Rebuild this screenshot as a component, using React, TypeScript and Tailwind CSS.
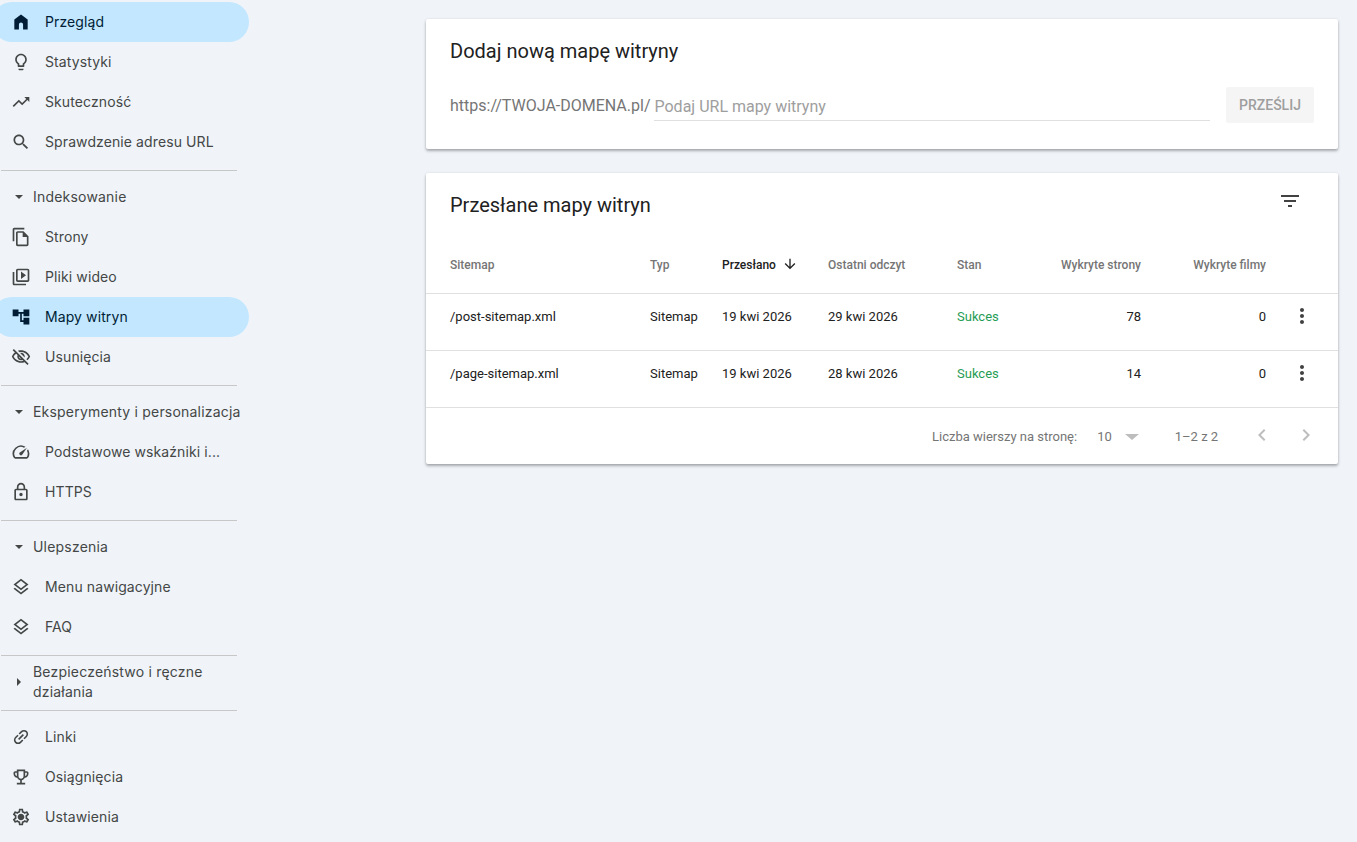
import React from "react";

const P: Record<string, string> = {
  home: "M4 21V9l8-6 8 6v12h-5.5v-6a2.5 2.5 0 0 0-5 0v6z",
  bulb: "M9 21c0 .55.45 1 1 1h4c.55 0 1-.45 1-1v-1H9v1zm3-19C8.14 2 5 5.14 5 9c0 2.38 1.19 4.47 3 5.74V17c0 .55.45 1 1 1h6c.55 0 1-.45 1-1v-2.26c1.81-1.27 3-3.36 3-5.74 0-3.86-3.14-7-7-7zm2.85 11.1l-.85.6V16h-4v-2.3l-.85-.6C7.8 12.16 7 10.63 7 9c0-2.76 2.24-5 5-5s5 2.24 5 5c0 1.63-.8 3.16-2.15 4.1z",
  trend: "M16 6l2.29 2.29-4.88 4.88-4-4L2 16.59 3.41 18l6-6 4 4 6.3-6.29L22 12V6z",
  search: "M15.5 14h-.79l-.28-.27C15.41 12.59 16 11.11 16 9.5 16 5.91 13.09 3 9.5 3S3 5.91 3 9.5 5.91 16 9.5 16c1.61 0 3.09-.59 4.23-1.57l.27.28v.79l5 4.99L20.49 19l-4.99-5zm-6 0C7.01 14 5 11.99 5 9.5S7.01 5 9.5 5 14 7.01 14 9.5 11.99 14 9.5 14z",
  copy: "M16 1H4c-1.1 0-2 .9-2 2v14h2V3h12V1zm-1 4H8c-1.1 0-1.99.9-1.99 2L6 21c0 1.1.89 2 1.99 2H19c1.1 0 2-.9 2-2V11l-6-6zM8 21V7h6v5h5v9H8z",
  video: "M4 6H2v14c0 1.1.9 2 2 2h14v-2H4V6zm16-4H8c-1.1 0-2 .9-2 2v12c0 1.1.9 2 2 2h12c1.1 0 2-.9 2-2V4c0-1.1-.9-2-2-2zm0 14H8V4h12v12zM12 5.5v9l6-4.5z",
  tree: "M22 11V3h-7v3H9V3H2v8h7V8h2v10h4v3h7v-8h-7v3h-2V8h2v3z",
  eyeoff: "M12 6c3.79 0 7.17 2.13 8.82 5.5-.59 1.22-1.42 2.27-2.41 3.12l1.41 1.41c1.39-1.23 2.49-2.77 3.18-4.53C21.27 7.11 17 4 12 4c-1.27 0-2.49.2-3.64.57l1.65 1.65C10.66 6.09 11.32 6 12 6zm-1.07 1.14L13 9.21c.57.25 1.03.71 1.28 1.28l2.07 2.07c.08-.34.14-.7.14-1.07C16.5 9.01 14.48 7 12 7c-.37 0-.72.05-1.07.14zM2.01 3.87l2.68 2.68C3.06 7.83 1.77 9.53 1 11.5 2.73 15.89 7 19 12 19c1.52 0 2.98-.29 4.32-.82l3.42 3.42 1.41-1.41L3.42 2.45 2.01 3.87zm7.5 7.5l2.61 2.61c-.04.01-.08.02-.12.02-1.38 0-2.5-1.12-2.5-2.5 0-.05.01-.08.01-.13zm-3.4-3.4l1.75 1.75c-.23.55-.36 1.15-.36 1.78 0 2.48 2.02 4.5 4.5 4.5.63 0 1.23-.13 1.77-.36l.98.98c-.88.24-1.8.38-2.75.38-3.79 0-7.17-2.13-8.82-5.5.7-1.43 1.72-2.61 2.93-3.53z",
  speed: "M20.38 8.57l-1.23 1.85a8 8 0 0 1-.22 7.58H5.07A8 8 0 0 1 15.58 6.85l1.85-1.23A10 10 0 0 0 3.35 19a2 2 0 0 0 1.72 1h13.85a2 2 0 0 0 1.74-1 10 10 0 0 0-.27-10.44zm-9.79 6.84a2 2 0 0 0 2.83 0l5.66-8.49-8.49 5.66a2 2 0 0 0 0 2.83z",
  lock: "M18 8h-1V6c0-2.76-2.24-5-5-5S7 3.24 7 6v2H6c-1.1 0-2 .9-2 2v10c0 1.1.9 2 2 2h12c1.1 0 2-.9 2-2V10c0-1.1-.9-2-2-2zM9 6c0-1.66 1.34-3 3-3s3 1.34 3 3v2H9V6zm9 14H6V10h12v10zm-6-3c1.1 0 2-.9 2-2s-.9-2-2-2-2 .9-2 2 .9 2 2 2z",
  layers: "M11.99 18.54l-7.37-5.73L3 14.07l9 7 9-7-1.63-1.27zM12 16l7.36-5.73L21 9l-9-7-9 7 1.63 1.27L12 16zm0-11.47L17.74 9 12 13.47 6.26 9 12 4.53z",
  link: "M3.9 12c0-1.71 1.39-3.1 3.1-3.1h4V7H7c-2.76 0-5 2.24-5 5s2.24 5 5 5h4v-1.9H7c-1.71 0-3.1-1.39-3.1-3.1zM8 13h8v-2H8v2zm9-6h-4v1.9h4c1.71 0 3.1 1.39 3.1 3.1s-1.39 3.1-3.1 3.1h-4V17h4c2.76 0 5-2.24 5-5s-2.24-5-5-5z",
  trophy: "M19 5h-2V3H7v2H5c-1.1 0-2 .9-2 2v1c0 2.55 1.92 4.63 4.39 4.94.63 1.5 1.98 2.63 3.61 2.96V19H7v2h10v-2h-4v-3.1c1.63-.33 2.98-1.46 3.61-2.96C19.08 12.63 21 10.55 21 8V7c0-1.1-.9-2-2-2zM5 8V7h2v3.82C5.84 10.4 5 9.3 5 8zm7 6c-1.65 0-3-1.35-3-3V5h6v6c0 1.65-1.35 3-3 3zm7-6c0 1.3-.84 2.4-2 2.82V7h2v1z",
  gear: "M19.43 12.98c.04-.32.07-.64.07-.98 0-.34-.03-.66-.07-.98l2.11-1.65c.19-.15.24-.42.12-.64l-2-3.46c-.09-.16-.26-.25-.44-.25-.06 0-.12.01-.17.03l-2.49 1c-.52-.4-1.08-.73-1.69-.98l-.38-2.65C14.46 2.18 14.25 2 14 2h-4c-.25 0-.46.18-.49.42l-.38 2.65c-.61.25-1.17.59-1.69.98l-2.49-1c-.06-.02-.12-.03-.18-.03-.17 0-.34.09-.43.25l-2 3.46c-.13.22-.07.49.12.64l2.11 1.65c-.04.32-.07.65-.07.98 0 .33.03.66.07.98l-2.11 1.65c-.19.15-.24.42-.12.64l2 3.46c.09.16.26.25.44.25.06 0 .12-.01.17-.03l2.49-1c.52.4 1.08.73 1.69.98l.38 2.65c.03.24.24.42.49.42h4c.25 0 .46-.18.49-.42l.38-2.65c.61-.25 1.17-.59 1.69-.98l2.49 1c.06.02.12.03.18.03.17 0 .34-.09.43-.25l2-3.46c.12-.22.07-.49-.12-.64l-2.11-1.65zm-1.98-1.71c.04.31.05.52.05.73 0 .21-.02.43-.05.73l-.14 1.13.89.7 1.08.84-.7 1.21-1.27-.51-1.04-.42-.9.68c-.43.32-.84.56-1.25.73l-1.06.43-.16 1.13-.2 1.35h-1.4l-.19-1.35-.16-1.13-1.06-.43c-.43-.18-.83-.41-1.23-.71l-.91-.7-1.06.43-1.27.51-.7-1.21 1.08-.84.89-.7-.14-1.13c-.03-.31-.05-.54-.05-.74s.02-.43.05-.73l.14-1.13-.89-.7-1.08-.84.7-1.21 1.27.51 1.04.42.9-.68c.43-.32.84-.56 1.25-.73l1.06-.43.16-1.13.2-1.35h1.39l.19 1.35.16 1.13 1.06.43c.43.18.83.41 1.23.71l.91.7 1.06-.43 1.27-.51.7 1.21-1.07.85-.89.7.14 1.13zM12 8c-2.21 0-4 1.79-4 4s1.79 4 4 4 4-1.79 4-4-1.79-4-4-4z",
  filter: "M10 18h4v-2h-4v2zM3 6v2h18V6H3zm3 7h12v-2H6v2z",
  more: "M12 8c1.1 0 2-.9 2-2s-.9-2-2-2-2 .9-2 2 .9 2 2 2zm0 2c-1.1 0-2 .9-2 2s.9 2 2 2 2-.9 2-2-.9-2-2-2zm0 6c-1.1 0-2 .9-2 2s.9 2 2 2 2-.9 2-2-.9-2-2-2z",
  down: "M20 12l-1.41-1.41L13 16.17V4h-2v12.17l-5.58-5.59L4 12l8 8 8-8z",
  left: "M15.41 7.41L14 6l-6 6 6 6 1.41-1.41L10.83 12z",
  right: "M10 6L8.59 7.41 13.17 12l-4.58 4.59L10 18l6-6z",
};

function Icon({ n, size = 20, className = "", rotate = false }: { n: string; size?: number; className?: string; rotate?: boolean }) {
  return (
    <svg width={size} height={size} viewBox="0 0 24 24" fill="currentColor" className={`shrink-0 ${className}`}>
      <path d={P[n]} transform={rotate ? "rotate(-45 12 12)" : undefined} />
    </svg>
  );
}

function Item({ icon, label, active = false, rotate = false }: { icon: string; label: string; active?: boolean; rotate?: boolean }) {
  return (
    <div className={`flex h-10 w-[257px] -ml-2 items-center rounded-full pl-[19px] ${active ? "bg-[#c2e7ff] text-[#001d35]" : "text-[#444746]"}`}>
      <Icon n={icon} size={20} rotate={rotate} />
      <span className="ml-[14px] text-[14px] leading-5 tracking-[0.1px] whitespace-nowrap">{label}</span>
    </div>
  );
}

function Head({ label, open = true }: { label: React.ReactNode; open?: boolean }) {
  return (
    <div className="mt-[6px] flex min-h-10 items-center pl-[15px] text-[#444746]">
      <span className="flex w-2 justify-center">
        {open ? (
          <span className="h-0 w-0 border-x-[4px] border-t-[4px] border-x-transparent border-t-[#444746]" />
        ) : (
          <span className="h-0 w-0 border-y-[4px] border-l-[4px] border-y-transparent border-l-[#444746]" />
        )}
      </span>
      <span className="ml-[10px] text-[14px] leading-5 tracking-[0.2px]">{label}</span>
    </div>
  );
}

const Divider = ({ className = "mt-2" }: { className?: string }) => <div className={`ml-px h-px w-[236px] bg-[#c7c7c7] ${className}`} />;

const cols = "grid grid-cols-[200px_72px_106px_129px_80px_104px_125px_72px] pl-6";

function Row({ name, read, pages }: { name: string; read: string; pages: string }) {
  return (
    <div className={`${cols} h-[57px] items-start border-b border-[#e0e0e0] pt-[13px] text-[13px] leading-5 text-[#212121]`}>
      <span>{name}</span>
      <span>Sitemap</span>
      <span>19 kwi 2026</span>
      <span>{read}</span>
      <span className="text-[#1f9d55]">Sukces</span>
      <span className="text-right">{pages}</span>
      <span className="text-right">0</span>
      <span className="-mt-[3px] flex justify-center text-[#424242]">
        <Icon n="more" size={24} />
      </span>
    </div>
  );
}

export default function App() {
  return (
    <div className="flex h-[842px] w-full overflow-hidden bg-[#f0f4f9] font-['Roboto',sans-serif]">
      <aside className="w-[249px] shrink-0 overflow-hidden pt-[2px] font-['Inter',sans-serif]">
        <Item icon="home" label="Przegląd" active />
        <Item icon="bulb" label="Statystyki" />
        <Item icon="trend" label="Skuteczność" />
        <Item icon="search" label="Sprawdzenie adresu URL" />
        <Divider />
        <Head label="Indeksowanie" />
        <Item icon="copy" label="Strony" />
        <Item icon="video" label="Pliki wideo" />
        <Item icon="tree" label="Mapy witryn" active />
        <Item icon="eyeoff" label="Usunięcia" />
        <Divider />
        <Head label="Eksperymenty i personalizacja" />
        <Item icon="speed" label="Podstawowe wskaźniki i..." />
        <Item icon="lock" label="HTTPS" />
        <Divider />
        <Head label="Ulepszenia" />
        <Item icon="layers" label="Menu nawigacyjne" />
        <Item icon="layers" label="FAQ" />
        <Divider />
        <Head open={false} label={<>Bezpieczeństwo i ręczne<br />działania</>} />
        <Divider />
        <div className="mt-[6px]">
          <Item icon="link" label="Linki" rotate />
          <Item icon="trophy" label="Osiągnięcia" />
          <Item icon="gear" label="Ustawienia" />
        </div>
      </aside>

      <main className="ml-[177px] w-[912px] shrink-0 pt-[19px]">
        <section className="h-[130px] rounded-[2px] bg-white px-6 shadow-[0_2px_3px_rgba(0,0,0,0.3),0_0_3px_rgba(0,0,0,0.08)]">
          <h2 className="flex h-16 items-center text-[20px] font-normal text-[#212121]">Dodaj nową mapę witryny</h2>
          <div className="mt-1 flex h-9 items-start">
            <span className="text-[16px] leading-[38px] text-[#757575] whitespace-nowrap">https://TWOJA-DOMENA.pl/</span>
            <input
              readOnly
              placeholder="Podaj URL mapy witryny"
              className="ml-[3px] mt-1 h-[30px] min-w-0 flex-1 border-b border-[#e0e0e0] bg-transparent pl-px pt-[2px] text-[16px] outline-none placeholder:text-[#9e9e9e]"
            />
            <button className="ml-4 h-9 w-[88px] rounded-[2px] bg-[#f5f5f5] text-[14px] font-medium text-[#9e9e9e]">PRZEŚLIJ</button>
          </div>
        </section>

        <section className="mt-6 h-[291px] rounded-[2px] bg-white shadow-[0_2px_3px_rgba(0,0,0,0.3),0_0_3px_rgba(0,0,0,0.08)]">
          <div className="flex h-16 items-center justify-between pl-6 pr-9">
            <h2 className="text-[20px] font-normal text-[#212121]">Przesłane mapy witryn</h2>
            <Icon n="filter" size={24} className="mb-2 text-[#424242]" />
          </div>
          <div className={`${cols} h-[57px] items-center border-b border-[#e0e0e0] text-[12px] font-medium text-[#757575]`}>
            <span>Sitemap</span>
            <span>Typ</span>
            <span className="flex items-center gap-[6px] text-[#212121]">
              Przesłano
              <Icon n="down" size={16} className="-mt-[3px] text-[#212121]" />
            </span>
            <span>Ostatni odczyt</span>
            <span>Stan</span>
            <span className="text-right">Wykryte strony</span>
            <span className="text-right">Wykryte filmy</span>
            <span />
          </div>
          <Row name="/post-sitemap.xml" read="29 kwi 2026" pages="78" />
          <Row name="/page-sitemap.xml" read="28 kwi 2026" pages="14" />
          <div className="flex h-[56px] items-center text-[13px] text-[#757575]">
            <span className="ml-[506px] mt-[1px]">Liczba wierszy na stronę:</span>
            <span className="ml-[20px] mt-[1px]">10</span>
            <span className="ml-[13px] mt-[1px] h-0 w-0 border-x-[7px] border-t-[6px] border-x-transparent border-t-[#bdbdbd]" />
            <span className="ml-[36px] mt-[1px]">1–2 z 2</span>
            <Icon n="left" size={24} className="ml-[32px] -mt-[2px] text-[#bdbdbd]" />
            <Icon n="right" size={24} className="ml-5 -mt-[2px] text-[#bdbdbd]" />
          </div>
        </section>
      </main>
    </div>
  );
}
